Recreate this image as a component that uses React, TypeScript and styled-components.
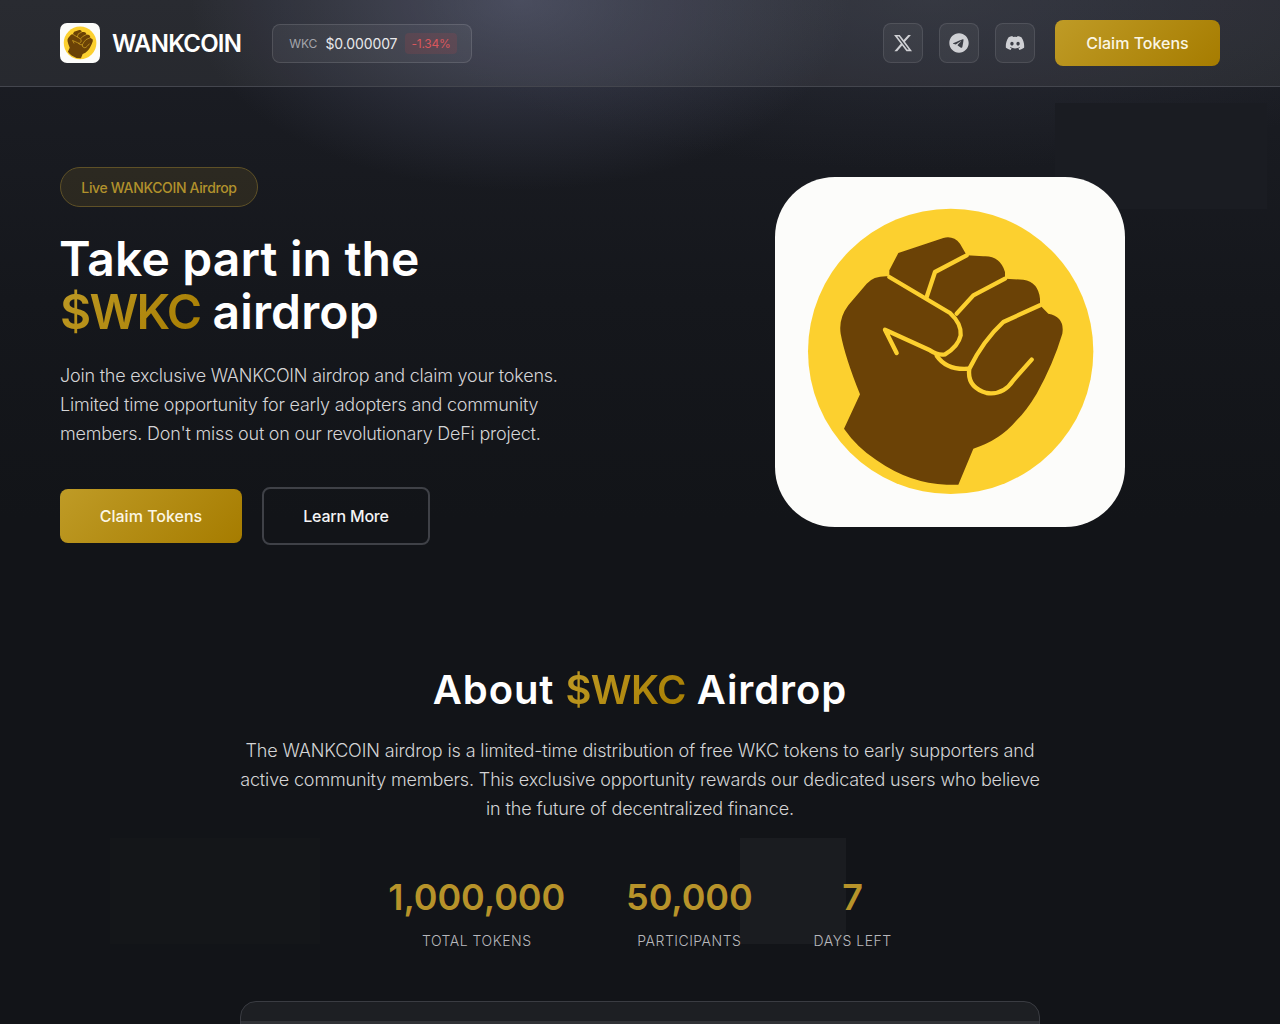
import styled, { createGlobalStyle } from "styled-components";
import { FaXTwitter, FaTelegram, FaDiscord } from "react-icons/fa6";

const GlobalStyle = createGlobalStyle`
  html, body {
    margin: 0;
    height: 1024px;
    overflow: hidden;
    background: #121418;
    font-family: "Inter", "Liberation Sans", sans-serif;
    color: #fff;
  }
  * { box-sizing: border-box; }
`;

const Page = styled.div`
  position: relative;
  height: 1024px;
  overflow: hidden;
`;

// faint squares and the glow behind the page
const Backdrop = styled.div`
  position: absolute;
  inset: 0;
  background-repeat: no-repeat;
  background-image:
    linear-gradient(#1a1c20, #1a1c20),
    linear-gradient(#141619, #141619),
    linear-gradient(#1a1c22, #1a1c22),
    radial-gradient(ellipse 330px 190px at 520px 0, rgba(86, 90, 116, 0.58), transparent),
    radial-gradient(ellipse 520px 170px at 930px 0, rgba(70, 74, 92, 0.32), transparent),
    linear-gradient(180deg, #1c1e25 0, #15171c 300px, #121418 520px);
  background-size: 106px 106px, 210px 106px, 212px 106px, 100% 100%, 100% 100%, 100% 100%;
  background-position: 740px 838px, 110px 838px, 1055px 103px, 0 0, 0 0, 0 0;
`;

const Content = styled.div`
  position: relative;
`;

const Header = styled.header`
  height: 87px;
  padding: 0 60px;
  display: flex;
  align-items: center;
  justify-content: space-between;
  border-bottom: 1px solid #44464e;
  background: rgba(255, 255, 255, 0.06);
`;

const HeaderLeft = styled.div`
  display: flex;
  align-items: center;
  gap: 31px;
`;

const Brand = styled.div`
  display: flex;
  align-items: center;
  gap: 12px;
`;

const BrandName = styled.span`
  font-size: 24px;
  font-weight: 600;
  letter-spacing: -0.8px;
`;

const PricePill = styled.div`
  width: 200px;
  height: 39px;
  padding: 0 16px;
  display: flex;
  align-items: center;
  gap: 8px;
  border: 1px solid rgba(255, 255, 255, 0.12);
  border-radius: 8px;
  background: rgba(255, 255, 255, 0.05);
`;

const PriceTicker = styled.span`
  font-size: 12px;
  color: #a4a5ab;
`;

const PriceValue = styled.span`
  font-size: 14px;
  font-weight: 400;
  letter-spacing: -0.1px;
  color: #e8e8ea;
`;

const PriceChange = styled.span`
  padding: 3px 6px;
  font-size: 12px;
  letter-spacing: -0.2px;
  color: #d9575c;
  border-radius: 4px;
  background: rgba(239, 68, 68, 0.12);
`;

const HeaderRight = styled.div`
  display: flex;
  align-items: center;
`;

const Socials = styled.div`
  display: flex;
  gap: 16px;
  margin-right: 20px;
`;

const SocialLink = styled.a`
  width: 40px;
  height: 40px;
  display: flex;
  align-items: center;
  justify-content: center;
  font-size: 20px;
  color: #cfd0d4;
  border: 1px solid rgba(255, 255, 255, 0.1);
  border-radius: 8px;
  background: rgba(255, 255, 255, 0.05);
`;

const GoldButton = styled.button<{ $wide?: boolean }>`
  height: ${(p) => (p.$wide ? "54px" : "46px")};
  width: ${(p) => (p.$wide ? "182px" : "165px")};
  font-family: inherit;
  font-size: 16px;
  font-weight: 500;
  color: #fbf6e4;
  border: 0;
  border-radius: 8px;
  background: linear-gradient(135deg, #bf9b26 0%, #a67c00 100%);
`;

const OutlineButton = styled.button`
  width: 168px;
  height: 58px;
  font-family: inherit;
  font-size: 16px;
  font-weight: 500;
  letter-spacing: -0.2px;
  color: #f4f4f6;
  border: 2px solid #3f4147;
  border-radius: 8px;
  background: transparent;
`;

const Hero = styled.section`
  padding: 80px 60px 0;
  display: grid;
  grid-template-columns: 540px 540px;
  gap: 80px;
  align-items: center;
`;

const Badge = styled.div`
  width: 198px;
  height: 40px;
  display: flex;
  align-items: center;
  justify-content: center;
  font-size: 14px;
  font-weight: 500;
  letter-spacing: -0.35px;
  color: #b1912c;
  border: 1px solid #5f5127;
  border-radius: 20px;
  background: rgba(191, 155, 38, 0.12);
`;

const HeroTitle = styled.h1`
  margin: 25px 0 0;
  font-size: 48px;
  line-height: 53px;
  font-weight: 600;
  letter-spacing: 0.15px;
  text-indent: -1px;
`;

const Gold = styled.span<{ $tight?: boolean }>`
  letter-spacing: ${(p) => (p.$tight ? "-1.8px" : "-0.6px")};
  background: linear-gradient(135deg, #bf9b26 0%, #a67c00 100%);
  -webkit-background-clip: text;
  background-clip: text;
  color: transparent;
`;

const HeroText = styled.p`
  margin: 23px 0 0;
  max-width: 510px;
  font-size: 18px;
  line-height: 29px;
  font-weight: 300;
  letter-spacing: -0.22px;
  color: #d4d4d6;
`;

const HeroActions = styled.div`
  margin-top: 39px;
  display: flex;
  align-items: center;
  gap: 20px;
`;

const HeroArt = styled.div`
  display: flex;
  justify-content: center;
  padding-bottom: 9px;
`;

const About = styled.section`
  margin-top: 117px;
  display: flex;
  flex-direction: column;
  align-items: center;
`;

const AboutTitle = styled.h2`
  margin: 0;
  font-size: 40px;
  line-height: 56px;
  font-weight: 600;
  letter-spacing: 0.9px;
`;

const AboutText = styled.p`
  margin: 19.4px 0 0;
  width: 800px;
  font-size: 18px;
  line-height: 28.6px;
  font-weight: 300;
  letter-spacing: -0.13px;
  text-align: center;
  color: #d4d4d6;
`;

const Stats = styled.div`
  margin-top: 51.6px;
  display: flex;
  justify-content: center;
  gap: 61px;
`;

const Stat = styled.div`
  display: flex;
  flex-direction: column;
  align-items: center;
`;

const StatValue = styled.div`
  font-size: 36px;
  line-height: 44px;
  font-weight: 600;
  letter-spacing: -0.1px;
  color: #b7932a;
`;

const StatLabel = styled.div`
  margin-top: 12px;
  font-size: 14px;
  line-height: 20px;
  font-weight: 300;
  letter-spacing: 0.5px;
  text-transform: uppercase;
  color: #b8b8bc;
`;

const ClaimCard = styled.div`
  margin-top: 50px;
  width: 800px;
  height: 200px;
  padding-top: 19px;
  border: 1px solid #3a3c42;
  border-radius: 16px;
  background: #1d1f23;
  overflow: hidden;
`;

const CardBand = styled.div`
  height: 100%;
  background: #303236;
`;

const LogoTile = styled.svg<{ $size: number; $radius: number }>`
  display: block;
  width: ${(p) => p.$size}px;
  height: ${(p) => p.$size}px;
  border-radius: ${(p) => p.$radius}px;
  background: #fcfcfa;
`;

function Logo({ size, radius }: { size: number; radius: number }) {
  return (
    <LogoTile $size={size} $radius={radius} viewBox="15 20 1050 1050">
      <circle cx="542" cy="543" r="428" fill="#fcd02f" />
      <path
        fill="#6b4206"
        d="M222 775 L270 672 Q225 560 212 490 Q205 445 235 405 L290 340 Q312 315 358 318 L358 300 L385 248 L520 203 Q550 195 570 220 L590 255 L640 258 Q690 255 705 305 L705 325 L760 328 Q805 335 810 385 L810 405 L835 430 Q885 440 877 490 Q850 580 800 670 Q770 720 740 750 Q690 810 610 835 L565 943 L530 943 Q420 940 320 870 Q260 830 222 775 Z"
      />
      <g fill="none" stroke="#fcd02f" strokeWidth="13" strokeLinecap="round" strokeLinejoin="round">
        <path d="M358 320 L540 428 Q575 460 572 495 Q565 528 525 552 Q505 556 480 540 L345 478 L380 548" />
        <path d="M590 255 L495 305 L470 380" />
        <path d="M705 325 L610 375 L560 430" />
        <path d="M810 405 L700 455 Q640 510 598 595 Q590 650 650 668 Q700 675 730 630 L785 568" />
        <path d="M500 556 Q530 600 595 595" />
      </g>
    </LogoTile>
  );
}

export default function App() {
  return (
    <>
      <GlobalStyle />
      <Page>
        <Backdrop />
        <Content>
          <Header>
            <HeaderLeft>
              <Brand>
                <Logo size={40} radius={7} />
                <BrandName>WANKCOIN</BrandName>
              </Brand>
              <PricePill>
                <PriceTicker>WKC</PriceTicker>
                <PriceValue>$0.000007</PriceValue>
                <PriceChange>-1.34%</PriceChange>
              </PricePill>
            </HeaderLeft>
            <HeaderRight>
              <Socials>
                <SocialLink>
                  <FaXTwitter />
                </SocialLink>
                <SocialLink>
                  <FaTelegram />
                </SocialLink>
                <SocialLink>
                  <FaDiscord />
                </SocialLink>
              </Socials>
              <GoldButton>Claim Tokens</GoldButton>
            </HeaderRight>
          </Header>

          <Hero>
            <div>
              <Badge>Live WANKCOIN Airdrop</Badge>
              <HeroTitle>
                Take part in the
                <br />
                <Gold $tight>$WKC</Gold> airdrop
              </HeroTitle>
              <HeroText>
                Join the exclusive WANKCOIN airdrop and claim your tokens.
                Limited time opportunity for early adopters and community
                members. Don't miss out on our revolutionary DeFi project.
              </HeroText>
              <HeroActions>
                <GoldButton $wide>Claim Tokens</GoldButton>
                <OutlineButton>Learn More</OutlineButton>
              </HeroActions>
            </div>
            <HeroArt>
              <Logo size={350} radius={60} />
            </HeroArt>
          </Hero>

          <About>
            <AboutTitle>
              About <Gold>$WKC</Gold> Airdrop
            </AboutTitle>
            <AboutText>
              The WANKCOIN airdrop is a limited-time distribution of free WKC
              tokens to early supporters and active community members. This
              exclusive opportunity rewards our dedicated users who believe in
              the future of decentralized finance.
            </AboutText>
            <Stats>
              <Stat>
                <StatValue>1,000,000</StatValue>
                <StatLabel>Total Tokens</StatLabel>
              </Stat>
              <Stat>
                <StatValue>50,000</StatValue>
                <StatLabel>Participants</StatLabel>
              </Stat>
              <Stat>
                <StatValue>7</StatValue>
                <StatLabel>Days Left</StatLabel>
              </Stat>
            </Stats>
            <ClaimCard>
              <CardBand />
            </ClaimCard>
          </About>
        </Content>
      </Page>
    </>
  );
}
